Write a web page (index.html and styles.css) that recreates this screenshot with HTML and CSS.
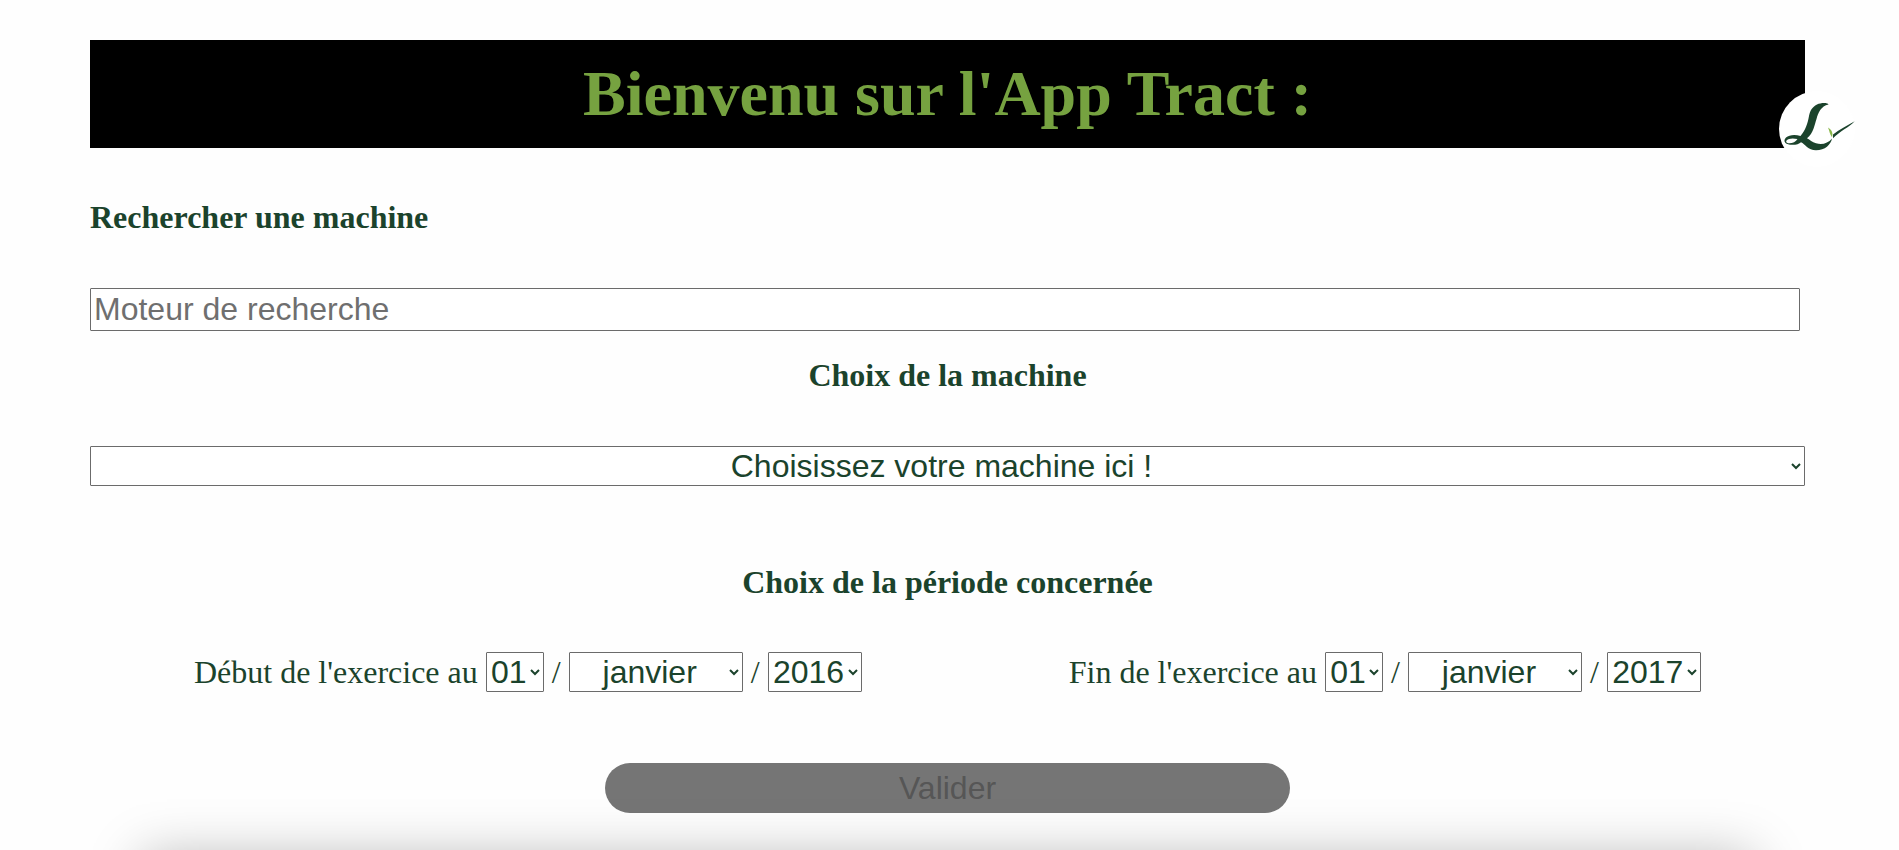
FILE: index.html
```
<!DOCTYPE html>
<html lang="fr">
<head>
<meta charset="utf-8">
<title>App Tract</title>
<link rel="stylesheet" href="styles.css">
</head>
<body>
<main class="page">
  <header class="banner">
    <h1 class="title">Bienvenu sur l'App Tract :</h1>
    <svg class="logo" viewBox="0 0 76 76" width="76" height="76" aria-label="Logo">
      <circle cx="38" cy="38" r="38" fill="#fff"/>
      <path fill="#1b432c" fill-rule="evenodd" d="M49.500 13.500C49 11.500 42 11.500 38 13.500C33 16 31 20 30 25C28.500 33 26.500 39 21.500 45C16 43.200 10 43.800 7 46.500C4 49.500 5.500 53 11 53.700C16 54.200 20 53.200 22 51.200C26 53 29 59.300 37 59.300C46 59.300 52 53.500 53 47.500C49 52.500 43 54 37 52.300C33 51 31 49 28 47.300C34.500 42 35.500 34 37.500 28C39 22 42 15 49.500 13.500ZM18.500 48C16.500 51.500 11 53.300 8 51.800C5.500 50 9 46 18.500 48Z"/>
      <path fill="#1b432c" d="M54 43.500C60 38.500 68 35 75.700 30.300C70 36.500 61 40 54 47.300Z"/>
      <path fill="#8ab84a" d="M49 36.500C53 39 54.200 42 53 46.300C50.800 43.500 50.500 40 49 36.500Z"/>
    </svg>
  </header>
  <h4 class="heading heading-left">Rechercher une machine</h4>
  <input class="search" type="text" placeholder="Moteur de recherche">
  <h4 class="heading heading-machine">Choix de la machine</h4>
  <select class="field machine"><option>Choisissez votre machine ici !</option></select>
  <h4 class="heading heading-period">Choix de la période concernée</h4>
  <div class="periods">
    <div class="period">
      <span>Début de l'exercice au</span>
      <select class="field day"><option>01</option></select>
      <span>/</span>
      <select class="field month"><option>janvier</option></select>
      <span>/</span>
      <select class="field year"><option>2016</option></select>
    </div>
    <div class="period">
      <span>Fin de l'exercice au</span>
      <select class="field day"><option>01</option></select>
      <span>/</span>
      <select class="field month"><option>janvier</option></select>
      <span>/</span>
      <select class="field year"><option>2017</option></select>
    </div>
  </div>
  <button class="submit" disabled>Valider</button>
  <section class="results"></section>
</main>
</body>
</html>
```
FILE: styles.css
```
html { height: 100%; overflow: hidden; }
body {
  margin: 0;
  height: 850px;
  overflow: hidden;
  background: #fefefe;
  color: #1b432c;
  font: 32px/37px "Liberation Serif", "Times New Roman", serif;
}
.page {
  box-sizing: border-box;
  width: 1715px;
  height: 850px;
  margin-left: 90px;
  padding-top: 40px;
  display: flex;
  flex-direction: column;
}
.page > * { flex-shrink: 0; }
.banner {
  position: relative;
  height: 108px;
  display: flex;
  align-items: center;
  justify-content: center;
  background: #000;
}
.title { margin: 0; color: #76a240; font-size: 64px; line-height: 74px; }
.logo { position: absolute; left: 1689px; top: 51px; overflow: visible; }
.heading { margin: 0; font-size: 32px; line-height: 37px; text-align: center; }
.heading-left { margin-top: 51px; text-align: left; }
.search {
  box-sizing: border-box;
  width: 1710px;
  height: 43px;
  margin-top: 52px;
  padding: 1px 3px;
  border: 1px solid #6b6b6b;
  border-radius: 1px;
  background: #fff;
  font: 32px "Liberation Sans", Arial, sans-serif;
}
.search::placeholder { color: #6f6f6f; }
.heading-machine { margin-top: 26px; }
.field {
  box-sizing: border-box;
  height: 40px;
  margin: 0;
  padding: 0;
  border: 1px solid #6b6b6b;
  border-radius: 1px;
  background-color: #fff;
  color: #1b432c;
  font: 32px "Liberation Sans", Arial, sans-serif;
  text-align: center;
}
.machine { width: 1715px; margin-top: 52px; }
.heading-period { margin-top: 78px; }
.periods { display: grid; grid-template-columns: 1fr 1fr; margin-top: 51px; }
.period {
  display: flex;
  justify-content: center;
  align-items: center;
  gap: 8px;
  padding-left: 17px;
  white-space: nowrap;
}
.period:first-child { padding-left: 18px; }
.day { width: 58px; }
.month { width: 174px; }
.year { width: 94px; }
.submit {
  width: 685px;
  height: 50px;
  margin: 71px auto 0;
  padding: 0;
  border: 0;
  border-radius: 25px;
  background: #757575;
  color: #565656;
  font: 32px "Liberation Sans", Arial, sans-serif;
}
/* soft shadow of the panel that starts under the fold */
.results {
  height: 0;
  margin: 27px 152px 0;
  box-shadow: 0 116px 50px 100px rgba(0, 0, 0, 0.27);
}
```
